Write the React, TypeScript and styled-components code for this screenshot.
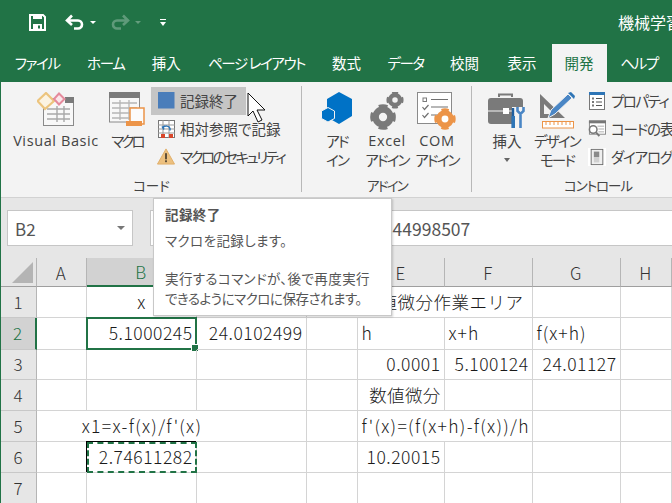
import React from "react";
import styled, { createGlobalStyle } from "styled-components";

const GlobalStyle = createGlobalStyle`
  html, body {
    margin: 0;
    padding: 0;
    background: #fff;
  }
  * {
    box-sizing: border-box;
  }
`;

const UI_FONT = `"Noto Sans CJK JP", "Liberation Sans", sans-serif`;

const Gear = ({ x, y, r, color }: { x: number; y: number; r: number; color: string }) => (
  <g fill="none" stroke={color}>
    <circle cx={x} cy={y} r={r * 0.62} strokeWidth={r * 0.55} />
    <circle
      cx={x}
      cy={y}
      r={r * 0.92}
      strokeWidth={r * 0.3}
      strokeDasharray={`${r * 0.72} ${r * 0.72}`}
      strokeDashoffset={r * 0.36}
    />
  </g>
);

const SaveIcon = () => (
  <svg width="17" height="17" viewBox="0 0 17 17">
    <path d="M1 1h13l2 2v13H1z" fill="none" stroke="#fff" strokeWidth="2" />
    <rect x="4" y="2" width="9" height="3" fill="#fff" />
    <rect x="4" y="10" width="9" height="6" fill="#fff" />
    <rect x="9" y="11.5" width="2" height="3" fill="#217346" />
  </svg>
);

const UndoIcon = ({ dim }: { dim?: boolean }) => (
  <svg
    width="20"
    height="16"
    viewBox="0 0 20 16"
    style={{ opacity: dim ? 0.28 : 1, transform: dim ? "scaleX(-1)" : undefined }}
  >
    <path
      d="M7 1.5 2 6.5l5 4.5M2.5 6.5H13a3.7 3.7 0 0 1 0 8H9"
      fill="none"
      stroke="#fff"
      strokeWidth="2.6"
    />
  </svg>
);

const VisualBasicIcon = () => (
  <svg width="38" height="34" viewBox="0 0 38 34">
    <rect x="6.5" y="6.5" width="30" height="27" fill="#f8f8f8" stroke="#8a8a8a" />
    <rect x="28" y="5" width="9" height="6" fill="#7b7b7b" />
    <path
      d="M10 17h23M10 22h23M10 27h23M20 14v16M27 14v16"
      stroke="#a8a8a8"
      strokeWidth="1.4"
      fill="none"
    />
    <path d="M9 1 17 9 8 17 0.5 9z" fill="#fbf3e2" stroke="#ecc47d" strokeWidth="2.2" />
    <path d="M22 1.5 27.5 7 22 12.5 17 7z" fill="#fbe6ea" stroke="#e58a9c" strokeWidth="2" />
  </svg>
);

const MacroIcon = () => (
  <svg width="37" height="35" viewBox="0 0 37 35">
    <rect x="0.5" y="1" width="30" height="29" fill="#f8f8f8" stroke="#8a8a8a" />
    <rect x="0" y="0" width="31" height="6" fill="#7b7b7b" />
    <path
      d="M3 11h25M3 16h25M3 21h18M3 26h18M11 8v20M20 8v20"
      stroke="#b5b5b5"
      strokeWidth="1.3"
      fill="none"
    />
    <path d="M21 16h14v16h-2H21z" fill="#fbfbfb" stroke="#ec9448" strokeWidth="1.5" />
    <rect x="17" y="29" width="16" height="5" fill="#ec9448" />
  </svg>
);

const StopIcon = () => (
  <svg width="17" height="17" viewBox="0 0 17 17">
    <rect width="16.5" height="16.5" fill="#4a7dba" />
  </svg>
);

const RelativeIcon = () => (
  <svg width="17" height="18" viewBox="0 0 17 18">
    <rect x="0.5" y="0.5" width="16" height="17" fill="#fff" stroke="#777" />
    <path d="M0 5h17M0 9h17M0 13h17M5 0v18M11 0v18" stroke="#999" fill="none" />
    <rect x="3" y="14" width="4" height="4" fill="#d9472b" />
    <rect x="11" y="14" width="4" height="4" fill="#d9472b" />
    <path d="M6 9.5 4.5 7 7 6M5 7.5c2-2 6-2 7 1v2" fill="none" stroke="#2e75b6" strokeWidth="1.5" />
  </svg>
);

const WarningIcon = () => (
  <svg width="19" height="17" viewBox="0 0 19 17">
    <path d="M9.5 0.5 18.5 16.5H0.5z" fill="#ecc07f" stroke="#e0ae68" />
    <rect x="8.5" y="5" width="2" height="6.5" fill="#5a4a35" />
    <rect x="8.5" y="12.5" width="2" height="2" fill="#5a4a35" />
  </svg>
);

const AddinIcon = () => (
  <svg width="32" height="33" viewBox="0 0 32 33">
    <path d="M18 0 31 7v17l-13 8-7-4v-7l-5-3V7z" fill="#0072c6" />
    <path d="M7 15.5 13.5 19v7.5L7 30 0.5 26.5V19z" fill="#0072c6" stroke="#f3f3f3" strokeWidth="1" />
  </svg>
);

const ExcelAddinIcon = () => (
  <svg width="34" height="38" viewBox="0 0 34 38">
    <Gear x={13} y={25} r={12} color="#7a7a7a" />
    <Gear x={25} y={8} r={8} color="#7a7a7a" />
  </svg>
);

const ComAddinIcon = () => (
  <svg width="40" height="38" viewBox="0 0 40 38">
    <rect x="0.5" y="0.5" width="34" height="31" fill="#fff" stroke="#8a8a8a" />
    <rect x="6" y="6" width="3.5" height="3.5" fill="none" stroke="#7a7a7a" />
    <path
      d="M14 7.5h17M14 15h17M14 23h8M5.5 15l2 2.5 4-4.5M5.5 23l2 2.5 4-4.5"
      fill="none"
      stroke="#707070"
      strokeWidth="1.2"
    />
    <Gear x={28} y={27} r={10} color="#ec9448" />
  </svg>
);

const InsertIcon = () => (
  <svg width="38" height="37" viewBox="0 0 38 37">
    <path d="M11 5V2.5h13V5" fill="none" stroke="#7a7a7a" strokeWidth="2" />
    <rect x="0" y="6" width="35" height="26" rx="3" fill="#7a7a7a" />
    <path d="M0 19h35" stroke="#f3f3f3" strokeWidth="1.2" />
    <rect x="15" y="16" width="6" height="6" fill="#fff" />
    <rect x="24" y="15" width="14" height="22" fill="#f3f3f3" />
    <path d="M25 16v20" stroke="#1f5f9f" strokeWidth="2.4" />
    <rect x="23.5" y="24" width="3.5" height="12" fill="#2e75b6" />
    <path
      d="M32.5 36V23M29.5 15v4l3 3 3-3v-4"
      fill="none"
      stroke="#4a86c5"
      strokeWidth="2.6"
    />
  </svg>
);

const DesignIcon = () => (
  <svg width="36" height="38" viewBox="0 0 36 38">
    <path d="M1 2v24h25zM5 12v10h10z" fill="#7a7a7a" fillRule="evenodd" />
    <path d="M9 26 12 18 29 2l4 4-17 16z" fill="#4a86c5" stroke="#f3f3f3" />
    <path d="M29 1l3-1 4 4-1 3z" fill="#2e75b6" />
    <rect x="3.5" y="29.5" width="31" height="6.5" fill="#fff" stroke="#ec9448" />
    <path d="M7 30v3M11 30v3M15 30v3M19 30v3M23 30v3M27 30v3M31 30v3" stroke="#ec9448" />
  </svg>
);

const PropertyIcon = () => (
  <svg width="16" height="18" viewBox="0 0 16 18">
    <rect x="0.5" y="0.5" width="15" height="17" fill="#fff" stroke="#777" />
    <rect width="16" height="3" fill="#2e75b6" />
    <path d="M7 6.5h6M7 10h6M7 13.5h6" stroke="#555" />
    <path d="M3 6.5h2M3 10h2M3 13.5h2" stroke="#777" strokeWidth="2" />
  </svg>
);

const CodeIcon = () => (
  <svg width="19" height="18" viewBox="0 0 19 18">
    <rect x="1.5" y="0.5" width="17" height="14" fill="#fff" stroke="#888" />
    <rect x="1" width="18" height="3" fill="#777" />
    <path d="M10 6h7M11 9h6M11 12h6" stroke="#aaa" />
    <circle cx="5.5" cy="9.5" r="4" fill="#fff" stroke="#777" strokeWidth="1.6" />
    <path d="M8.5 12.5 12 16.5" stroke="#777" strokeWidth="2" />
  </svg>
);

const DialogIcon = () => (
  <svg width="20" height="20" viewBox="0 0 20 20">
    <rect width="20" height="20" fill="#fff" />
    <rect x="3.5" y="1.5" width="13" height="17" fill="#efefef" stroke="#666" />
    <rect x="6.5" y="4" width="6" height="6" fill="#8a8a8a" />
    <rect x="6.5" y="10" width="6" height="6" fill="#d0d0d0" />
  </svg>
);

const Root = styled.div`
  position: relative;
  width: 672px;
  height: 503px;
  overflow: hidden;
  border-left: 1.5px solid #217346;
  background: #fff;
  font-family: ${UI_FONT};
  font-feature-settings: "palt";
  color: #444;
`;

const TitleBar = styled.div`
  height: 44px;
  background: #217346;
  display: flex;
  align-items: center;
  padding-left: 28px;
  color: #fff;
  white-space: nowrap;
`;

const QuickTools = styled.div`
  display: flex;
  align-items: center;
  width: 589px;
  flex-shrink: 0;
`;

const QuickButton = styled.div<{ $gap: number }>`
  display: flex;
  align-items: center;
  margin-right: ${(p) => p.$gap}px;
`;

const Caret = styled.span<{ $dim?: boolean; $gap?: number }>`
  width: 0;
  height: 0;
  margin-left: ${(p) => p.$gap ?? 5}px;
  border-left: 3px solid transparent;
  border-right: 3px solid transparent;
  border-top: 3px solid #fff;
  opacity: ${(p) => (p.$dim ? 0.3 : 1)};
`;

const CustomizeMark = styled.span`
  width: 6px;
  height: 7px;
  border-top: 1px solid #fff;
  position: relative;
  &::after {
    content: "";
    position: absolute;
    left: 0;
    top: 2px;
    border-left: 3px solid transparent;
    border-right: 3px solid transparent;
    border-top: 4px solid #fff;
  }
`;

const DocTitle = styled.div`
  font-size: 16px;
  flex-shrink: 0;
`;

const TabRow = styled.div`
  height: 38px;
  background: #217346;
  display: flex;
  white-space: nowrap;
`;

const Tab = styled.div<{ $width: number; $active?: boolean; $kana?: boolean }>`
  width: ${(p) => p.$width}px;
  flex-shrink: 0;
  display: flex;
  justify-content: center;
  align-items: center;
  padding-bottom: 2px;
  font-size: 14.5px;
  letter-spacing: ${(p) => (p.$kana ? "-1.4px" : "0")};
  background: ${(p) => (p.$active ? "#f3f3f3" : "transparent")};
  color: ${(p) => (p.$active ? "#217346" : "#fff")};
`;

const Ribbon = styled.div`
  height: 116px;
  background: #f3f3f3;
  border-bottom: 1px solid #d2d2d2;
  display: flex;
`;

const Group = styled.div<{ $width: number; $last?: boolean }>`
  width: ${(p) => p.$width}px;
  flex-shrink: 0;
  position: relative;
  display: flex;
  flex-direction: column;
  &::after {
    content: "";
    display: ${(p) => (p.$last ? "none" : "block")};
    position: absolute;
    right: 0;
    top: 4px;
    bottom: 5px;
    width: 1px;
    background: #b8b8b8;
  }
`;

const GroupBody = styled.div<{ $inset: number }>`
  flex: 1;
  display: flex;
  padding: 5px 0 0 ${(p) => p.$inset}px;
  min-height: 0;
`;

const GroupLabel = styled.div`
  height: 23px;
  text-align: center;
  font-size: 13.5px;
  line-height: 22px;
  white-space: nowrap;
`;

const BigButton = styled.div<{ $width: number }>`
  width: ${(p) => p.$width}px;
  flex-shrink: 0;
  display: flex;
  flex-direction: column;
  align-items: center;
  text-align: center;
  font-size: 14.5px;
  line-height: 19px;
  white-space: nowrap;
`;

const BigIcon = styled.div`
  height: 44px;
  padding-top: 5px;
  display: flex;
  justify-content: center;
  align-items: flex-start;
`;

const Narrow = styled.span<{ $amount?: number }>`
  letter-spacing: ${(p) => p.$amount ?? -1.8}px;
`;

const Latin = styled.span`
  font-family: "Open Sans", "Liberation Sans", sans-serif;
  letter-spacing: 0.6px;
`;

const DropCaret = styled.span`
  margin-top: 8px;
  width: 0;
  height: 0;
  border-left: 3.5px solid transparent;
  border-right: 3.5px solid transparent;
  border-top: 4px solid #666;
`;

const SmallColumn = styled.div<{ $gap: number }>`
  margin-left: ${(p) => p.$gap}px;
  display: flex;
  flex-direction: column;
`;

const SmallButton = styled.div<{ $hover?: boolean }>`
  height: 28px;
  display: flex;
  align-items: center;
  gap: 5px;
  padding: 0 0 1px 6px;
  width: ${(p) => (p.$hover ? "95px" : "auto")};
  font-size: 14.5px;
  white-space: nowrap;
  background: ${(p) => (p.$hover ? "#c5c5c5" : "transparent")};
`;

const SmallIcon = styled.span`
  width: 18px;
  display: flex;
  justify-content: center;
  align-items: center;
`;

const FormulaBar = styled.div`
  height: 60px;
  background: #e6e6e6;
  display: flex;
  padding: 12px 0 12px 6px;
`;

const NameBox = styled.div`
  width: 126px;
  background: #fff;
  border: 1px solid #c6c6c6;
  display: flex;
  align-items: center;
  justify-content: space-between;
  padding: 0 7px 0 7px;
  font-size: 17px;
  color: #555;
`;

const NameCaret = styled.span`
  width: 0;
  height: 0;
  border-left: 4px solid transparent;
  border-right: 4px solid transparent;
  border-top: 4px solid #777;
`;

const FormulaInput = styled.div`
  flex: 1;
  margin-left: 17px;
  background: #fff;
  border-top: 1px solid #c6c6c6;
  border-bottom: 1px solid #c6c6c6;
  border-left: 1px solid #c6c6c6;
  padding-left: 159px;
  display: flex;
  align-items: center;
  font-size: 17.5px;
  color: #555;
  white-space: nowrap;
  font-feature-settings: normal;
`;

const Sheet = styled.div`
  display: grid;
  grid-template-columns: 35.5px 50px 110px 110px 51px 87px 88px 88px 51px;
  grid-template-rows: 29px 31px 32px 30px 31px 31px 31px 31px;
  font-size: 17.5px;
  font-weight: 300;
  letter-spacing: 0.5px;
  color: #1a1a1a;
  font-feature-settings: normal;
`;

const Corner = styled.div`
  background: #e6e6e6;
  border-bottom: 1px solid #9f9f9f;
  border-right: 1px solid #b5b5b5;
  position: relative;
  &::after {
    content: "";
    position: absolute;
    right: 3px;
    bottom: 3px;
    border-style: solid;
    border-width: 0 0 21px 21px;
    border-color: transparent transparent #b4b4b4 transparent;
  }
`;

const ColHeader = styled.div<{ $active?: boolean }>`
  background: ${(p) => (p.$active ? "#d2d2d2" : "#e6e6e6")};
  color: ${(p) => (p.$active ? "#217346" : "#333")};
  border-right: 1px solid #b5b5b5;
  border-bottom: ${(p) => (p.$active ? "2px solid #217346" : "1px solid #9f9f9f")};
  display: flex;
  align-items: center;
  justify-content: center;
  font-size: 17px;
`;

const RowHeader = styled.div<{ $active?: boolean }>`
  background: ${(p) => (p.$active ? "#d2d2d2" : "#e6e6e6")};
  color: ${(p) => (p.$active ? "#217346" : "#333")};
  border-right: ${(p) => (p.$active ? "2px solid #217346" : "1px solid #b5b5b5")};
  border-bottom: 1px solid #c8c8c8;
  display: flex;
  align-items: center;
  justify-content: center;
  padding-bottom: 2px;
  font-size: 17px;
`;

const Cell = styled.div<{ $align?: string; $open?: boolean; $spacing?: number }>`
  position: relative;
  display: flex;
  align-items: center;
  justify-content: ${(p) => p.$align ?? "flex-end"};
  padding: 0 ${(p) => (p.$align === "flex-start" ? 0 : 3)}px 2px 4px;
  border-bottom: 1px solid #d4d4d4;
  border-right: ${(p) => (p.$open ? "none" : "1px solid #d4d4d4")};
  white-space: nowrap;
  letter-spacing: ${(p) => (p.$spacing === undefined ? "inherit" : `${p.$spacing}px`)};
`;

const Selected = styled.span`
  position: absolute;
  left: -1px;
  top: -1px;
  right: -1px;
  bottom: -1px;
  border: 2px solid #217346;
  &::after {
    content: "";
    position: absolute;
    right: -4px;
    bottom: -4px;
    width: 6px;
    height: 6px;
    background: #217346;
    border: 1px solid #fff;
  }
`;

const CopyAnts = styled.span`
  position: absolute;
  left: 0;
  top: 0;
  right: -1px;
  bottom: -1px;
  border: 2px dashed #217346;
  box-shadow: -1px -1px 0 #000;
`;

const Tooltip = styled.div`
  position: absolute;
  left: 152px;
  top: 198px;
  width: 239px;
  height: 118px;
  background: #fff;
  border: 1px solid #c8c8c8;
  box-shadow: 1px 1px 2px rgba(0, 0, 0, 0.18);
  padding: 6px 0 0 11px;
  font-size: 13.5px;
  line-height: 19.5px;
  letter-spacing: 0.4px;
  color: #555;
  white-space: nowrap;
`;

const TooltipTitle = styled.div`
  font-weight: 700;
  margin-bottom: 6px;
`;

const TooltipGap = styled.div`
  height: 19px;
`;

const TooltipLine = styled.div<{ $spacing?: number }>`
  letter-spacing: ${(p) => (p.$spacing === undefined ? "inherit" : `${p.$spacing}px`)};
`;

const Pointer = styled.svg`
  position: absolute;
  left: 246px;
  top: 92px;
`;

const tabs = [
  { label: "ファイル", width: 72.5, kana: true },
  { label: "ホーム", width: 64.5, kana: true },
  { label: "挿入", width: 56.5 },
  { label: "ページ レイアウト", width: 124, kana: true },
  { label: "数式", width: 56 },
  { label: "データ", width: 62, kana: true },
  { label: "校閲", width: 56 },
  { label: "表示", width: 59 },
  { label: "開発", width: 55, active: true },
  { label: "ヘルプ", width: 65, kana: true },
];

const columns = ["A", "B", "C", "D", "E", "F", "G", "H"];

type CellData = {
  text?: string;
  align?: string;
  open?: boolean;
  spacing?: number;
  selected?: boolean;
  copied?: boolean;
};

const rows: CellData[][] = [
  [{}, { text: "x", align: "center" }, {}, { open: true }, { text: "数値微分作業エリア", align: "flex-start", open: true, spacing: 0.5 }, {}, {}, {}],
  [{}, { text: "5.1000245", selected: true }, { text: "24.0102499" }, {}, { text: "h", align: "flex-start" }, { text: "x+h", align: "flex-start", spacing: 1 }, { text: "f(x+h)", align: "flex-start", spacing: 1 }, {}],
  [{}, {}, {}, {}, { text: "0.0001" }, { text: "5.100124" }, { text: "24.01127" }, {}],
  [{}, {}, {}, {}, { text: "数値微分", spacing: 0.3 }, {}, {}, {}],
  [{ open: true }, { text: "x1=x-f(x)/f'(x)", align: "center", open: true, spacing: 1.3 }, {}, {}, { text: "f'(x)=(f(x+h)-f(x))/h", align: "flex-start", open: true, spacing: 1.3 }, {}, {}, {}],
  [{}, { text: "2.74611282", copied: true }, {}, {}, { text: "10.20015" }, {}, {}, {}],
  [{}, {}, {}, {}, {}, {}, {}, {}],
];

export default function App() {
  return (
    <>
      <GlobalStyle />
      <Root>
        <TitleBar>
          <QuickTools>
            <QuickButton $gap={19}>
              <SaveIcon />
            </QuickButton>
            <QuickButton $gap={14}>
              <UndoIcon />
              <Caret />
            </QuickButton>
            <QuickButton $gap={19}>
              <UndoIcon dim />
              <Caret $dim />
            </QuickButton>
            <CustomizeMark />
          </QuickTools>
          <DocTitle>機械学習.xlsx - Excel</DocTitle>
        </TitleBar>

        <TabRow>
          {tabs.map((t) => (
            <Tab key={t.label} $width={t.width} $active={t.active} $kana={t.kana}>
              {t.label}
            </Tab>
          ))}
        </TabRow>

        <Ribbon>
          <Group $width={301}>
            <GroupBody $inset={7}>
              <BigButton $width={96}>
                <BigIcon>
                  <VisualBasicIcon />
                </BigIcon>
                <Latin>Visual Basic</Latin>
              </BigButton>
              <BigButton $width={46}>
                <BigIcon>
                  <MacroIcon />
                </BigIcon>
                <Narrow $amount={-3}>マクロ</Narrow>
              </BigButton>
              <SmallColumn $gap={1}>
                <SmallButton $hover>
                  <SmallIcon>
                    <StopIcon />
                  </SmallIcon>
                  記録終了
                </SmallButton>
                <SmallButton>
                  <SmallIcon>
                    <RelativeIcon />
                  </SmallIcon>
                  相対参照で記録
                </SmallButton>
                <SmallButton>
                  <SmallIcon>
                    <WarningIcon />
                  </SmallIcon>
                  <Narrow $amount={-2.5}>マクロのセキュリティ</Narrow>
                </SmallButton>
              </SmallColumn>
            </GroupBody>
            <GroupLabel>コード</GroupLabel>
          </Group>

          <Group $width={170}>
            <GroupBody $inset={10}>
              <BigButton $width={50}>
                <BigIcon>
                  <AddinIcon />
                </BigIcon>
                <Narrow>アド</Narrow>
                <Narrow>イン</Narrow>
              </BigButton>
              <BigButton $width={50}>
                <BigIcon>
                  <ExcelAddinIcon />
                </BigIcon>
                <Latin>Excel</Latin>
                <Narrow>アドイン</Narrow>
              </BigButton>
              <BigButton $width={50}>
                <BigIcon>
                  <ComAddinIcon />
                </BigIcon>
                <Latin>COM</Latin>
                <Narrow>アドイン</Narrow>
              </BigButton>
            </GroupBody>
            <GroupLabel>
              <Narrow>アドイン</Narrow>
            </GroupLabel>
          </Group>

          <Group $width={252} $last>
            <GroupBody $inset={10}>
              <BigButton $width={50}>
                <BigIcon>
                  <InsertIcon />
                </BigIcon>
                挿入
                <DropCaret />
              </BigButton>
              <BigButton $width={50}>
                <BigIcon>
                  <DesignIcon />
                </BigIcon>
                <Narrow>デザイン</Narrow>
                <Narrow>モード</Narrow>
              </BigButton>
              <SmallColumn $gap={0}>
                <SmallButton>
                  <SmallIcon>
                    <PropertyIcon />
                  </SmallIcon>
                  <Narrow $amount={-1.5}>プロパティ</Narrow>
                </SmallButton>
                <SmallButton>
                  <SmallIcon>
                    <CodeIcon />
                  </SmallIcon>
                  <Narrow $amount={-1.2}>コードの表示</Narrow>
                </SmallButton>
                <SmallButton>
                  <SmallIcon>
                    <DialogIcon />
                  </SmallIcon>
                  <Narrow $amount={-1.2}>ダイアログの実行</Narrow>
                </SmallButton>
              </SmallColumn>
            </GroupBody>
            <GroupLabel>
              <Narrow $amount={-1}>コントロール</Narrow>
            </GroupLabel>
          </Group>
        </Ribbon>

        <FormulaBar>
          <NameBox>
            B2
            <NameCaret />
          </NameBox>
          <FormulaInput>2.746112844998507</FormulaInput>
        </FormulaBar>

        <Sheet>
          <Corner />
          {columns.map((c) => (
            <ColHeader key={c} $active={c === "B"}>
              {c}
            </ColHeader>
          ))}
          {rows.map((row, r) => (
            <React.Fragment key={r}>
              <RowHeader $active={r === 1}>{r + 1}</RowHeader>
              {row.map((cell, c) => (
                <Cell key={c} $align={cell.align} $open={cell.open} $spacing={cell.spacing}>
                  {cell.text}
                  {cell.selected && <Selected />}
                  {cell.copied && <CopyAnts />}
                </Cell>
              ))}
            </React.Fragment>
          ))}
        </Sheet>

        <Tooltip>
          <TooltipTitle>記録終了</TooltipTitle>
          <TooltipLine>マクロを記録します。</TooltipLine>
          <TooltipGap />
          <TooltipLine>実行するコマンドが、後で再度実行</TooltipLine>
          <TooltipLine $spacing={-0.5}>できるようにマクロに保存されます。</TooltipLine>
        </Tooltip>

        <Pointer width="20" height="32" viewBox="0 0 20 32">
          <path
            d="M1 1v23l5-5 5 11 4-2-5-10h8z"
            fill="#fff"
            stroke="#111"
            strokeWidth="1"
          />
        </Pointer>
      </Root>
    </>
  );
}
